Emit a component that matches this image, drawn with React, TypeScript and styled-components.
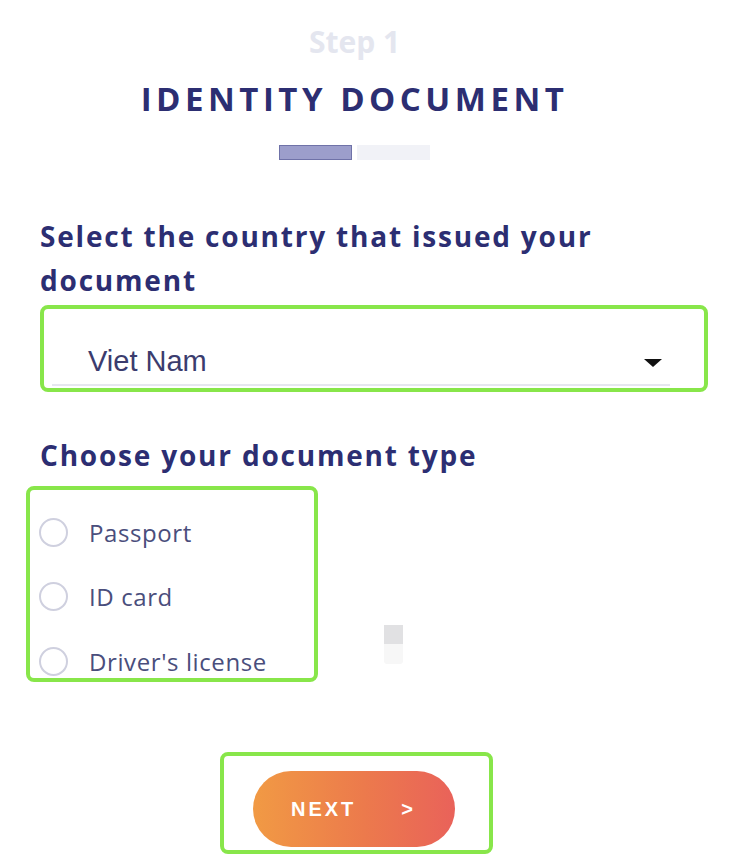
import React from 'react';
import styled, { createGlobalStyle } from 'styled-components';

const GlobalStyle = createGlobalStyle`
    html, body {
        margin: 0;
        padding: 0;
        background: #ffffff;
    }

    * {
        box-sizing: border-box;
    }
`;

const highlight = '#88e64a';
const navy = '#2c2e72';

const Page = styled.div`
    width: 736px;
    height: 862px;
    overflow: hidden;
    font-family: 'Open Sans', 'Liberation Sans', sans-serif;
`;

const Header = styled.div`
    display: flex;
    flex-direction: column;
    align-items: center;
    padding-right: 27px;
`;

const StepLabel = styled.div`
    padding-top: 24px;
    font-size: 30px;
    line-height: 36px;
    font-weight: 700;
    color: #e4e6ef;
`;

const Title = styled.h1`
    margin: 18px 0 0;
    font-size: 33px;
    line-height: 42px;
    font-weight: 700;
    letter-spacing: 4.5px;
    color: ${navy};
`;

const Progress = styled.div`
    display: flex;
    gap: 5px;
    margin-top: 25px;
`;

const ProgressStep = styled.div<{ $active?: boolean }>`
    width: 73px;
    height: 15px;
    background: ${props => (props.$active ? '#9c9ecb' : '#f1f2f7')};
    border: 1px solid ${props => (props.$active ? '#6f72a8' : '#f1f2f7')};
`;

const Form = styled.div`
    padding: 0 40px;
`;

const Question = styled.h2<{ $top: number }>`
    margin: ${props => props.$top}px 0 0;
    font-size: 28px;
    line-height: 44px;
    font-weight: 700;
    letter-spacing: 1.8px;
    color: ${navy};
`;

const Frame = styled.div`
    border: 4px solid ${highlight};
    border-radius: 8px;
`;

const SelectFrame = styled(Frame)`
    margin-top: 3px;
    width: 668px;
    height: 87px;
    padding: 22px 34px 0 8px;
`;

const SelectField = styled.div`
    display: flex;
    align-items: center;
    justify-content: space-between;
    height: 55px;
    padding: 8px 8px 0 36px;
    border-bottom: 2px solid #e6e7ef;
`;

const SelectValue = styled.span`
    font-family: 'Liberation Sans', Arial, sans-serif;
    font-size: 29px;
    color: #3b3c6e;
`;

const Caret = styled.span`
    width: 0;
    height: 0;
    margin-top: 2px;
    border-left: 9px solid transparent;
    border-right: 9px solid transparent;
    border-top: 8px solid #111111;
`;

const TypeRow = styled.div`
    display: flex;
    align-items: flex-start;
    margin-top: 9px;
    margin-left: -14px;
`;

const RadioFrame = styled(Frame)`
    width: 292px;
    height: 196px;
    padding: 10px 0 0 9px;
`;

const RadioOption = styled.label`
    display: flex;
    align-items: center;
    gap: 21px;
    height: 64.5px;
    font-size: 24px;
    letter-spacing: 0.6px;
    color: #4a4e7c;
    cursor: pointer;
`;

const RadioCircle = styled.span`
    flex: none;
    width: 29px;
    height: 29px;
    border-radius: 50%;
    border: 2px solid #cfd0df;
    background: #ffffff;
`;

const Ghost = styled.div`
    margin: 139px 0 0 66px;
    width: 19px;
`;

const GhostTop = styled.div`
    height: 19px;
    background: #e1e1e3;
`;

const GhostBottom = styled.div`
    height: 20px;
    background: #f7f7f7;
    border-radius: 0 0 3px 3px;
`;

const ButtonRow = styled.div`
    margin-top: 70px;
    padding-left: 180px;
`;

const ButtonFrame = styled(Frame)`
    width: 273px;
    height: 102px;
    padding: 15px 0 0 29px;
`;

const NextButton = styled.button`
    display: flex;
    align-items: center;
    width: 202px;
    height: 76px;
    padding: 0 0 0 38px;
    border: none;
    border-radius: 38px;
    background: linear-gradient(90deg, #f19a44 0%, #ec7a4c 55%, #e9625a 100%);
    color: #ffffff;
    font-family: 'Liberation Sans', Arial, sans-serif;
    font-size: 20px;
    font-weight: 700;
    letter-spacing: 3px;
    cursor: pointer;
`;

const Arrow = styled.span`
    margin-left: 45px;
    font-size: 20px;
`;

const documentTypes = ['Passport', 'ID card', "Driver's license"];

const App = () => {
    return (
        <Page>
            <GlobalStyle />
            <Header>
                <StepLabel>Step 1</StepLabel>
                <Title>IDENTITY DOCUMENT</Title>
                <Progress>
                    <ProgressStep $active />
                    <ProgressStep />
                </Progress>
            </Header>
            <Form>
                <Question $top={54}>
                    Select the country that issued your
                    <br />
                    document
                </Question>
                <SelectFrame>
                    <SelectField>
                        <SelectValue>Viet Nam</SelectValue>
                        <Caret />
                    </SelectField>
                </SelectFrame>
                <Question $top={41}>Choose your document type</Question>
                <TypeRow>
                    <RadioFrame>
                        {documentTypes.map(type => (
                            <RadioOption key={type}>
                                <RadioCircle />
                                {type}
                            </RadioOption>
                        ))}
                    </RadioFrame>
                    <Ghost>
                        <GhostTop />
                        <GhostBottom />
                    </Ghost>
                </TypeRow>
                <ButtonRow>
                    <ButtonFrame>
                        <NextButton>
                            NEXT
                            <Arrow>&gt;</Arrow>
                        </NextButton>
                    </ButtonFrame>
                </ButtonRow>
            </Form>
        </Page>
    );
};

export default App;
